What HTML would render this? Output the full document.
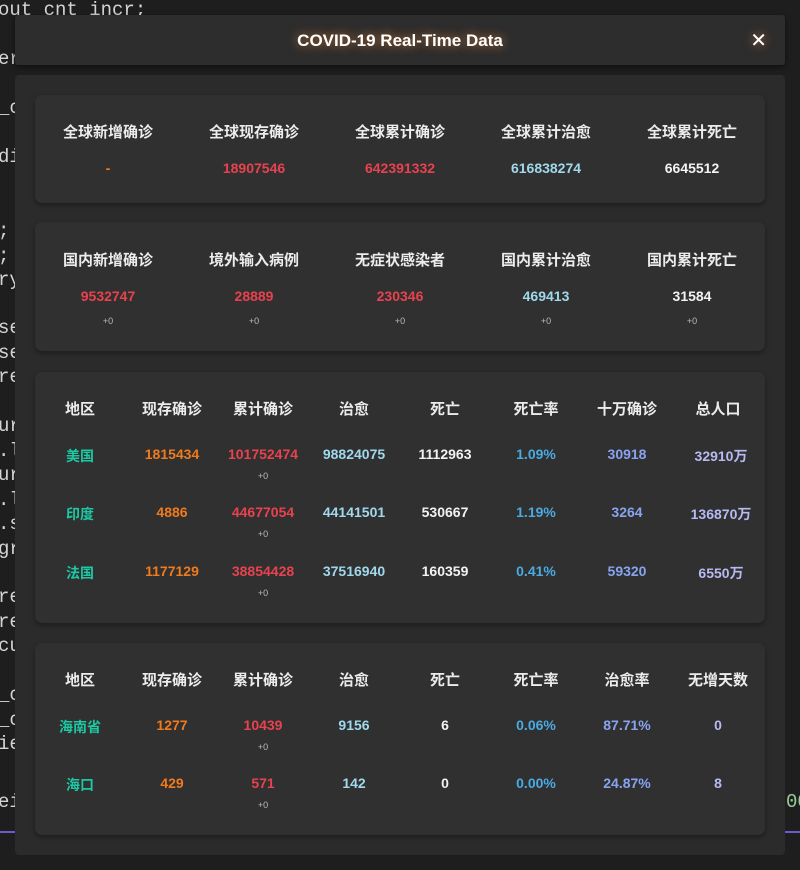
<!DOCTYPE html><html><head><meta charset="utf-8"><style>
*{margin:0;padding:0;box-sizing:border-box}
body{width:800px;height:870px;background:#1e1e1e;position:relative;overflow:hidden;font-family:"Liberation Sans","Noto Sans CJK SC",sans-serif;font-weight:bold}
.code{position:absolute;left:-2px;font-family:"Liberation Mono",monospace;font-weight:normal;font-size:19px;color:#d4d4d4;line-height:24.5px}
.hdr{position:absolute;left:15px;top:15px;width:770px;height:50px;background:#2d2d2d;border-radius:3px;color:#fff;font-size:17px;text-align:center;line-height:52px;box-shadow:0 2px 6px rgba(0,0,0,.5)}
.hdr span{text-shadow:0 0 10px rgba(240,140,60,.8)}
.x{position:absolute;right:18px;top:0;font-size:20px;font-weight:normal}
.panel{position:absolute;left:15px;top:75px;width:770px;height:780px;background:#2b2b2b;border-radius:4px}
.card{position:absolute;left:35px;width:730px;background:#303030;border-radius:7px;box-shadow:0 2px 5px rgba(0,0,0,.35)}
.t{position:absolute;text-align:center;font-size:15px;color:#ececec;transform:translateX(-50%);white-space:nowrap}
.v{font-size:14px}.s{font-size:9px;color:#bbb;font-weight:normal}
.r{color:#e8424f}.o{color:#f07a1c}.lb{color:#a0d8ec}.w{color:#f2f2f2}.g{color:#1cc9a4}.b{color:#4aaae2}.p{color:#88a4f0}.l{color:#b8baf2}
</style></head><body>
<div class="code" style="top:-2px">out_cnt_incr;</div>
<div class="code" style="top:47px">er</div>
<div class="code" style="top:96px">_c</div>
<div class="code" style="top:145px">di</div>
<div class="code" style="top:219px">;<br>;<br>ry</div>
<div class="code" style="top:316px">se<br>se<br>re</div>
<div class="code" style="top:414px">ur<br>.l<br>ur<br>.l<br>.s<br>gr</div>
<div class="code" style="top:585px">re<br>re<br>cu</div>
<div class="code" style="top:683px">_c<br>_c<br>ie</div>
<div class="code" style="top:790px">ei</div>
<div class="code" style="top:790px;left:786px;color:#9c9">00</div>
<div style="position:absolute;left:0;top:831px;width:800px;height:2px;background:#6a5acd"></div>
<div class="hdr"><span>COVID-19 Real-Time Data</span><span class="x">✕</span></div>
<div class="panel"></div>
<div class="card" style="top:95px;height:108px"></div>
<div class="card" style="top:222px;height:129px"></div>
<div class="card" style="top:372px;height:251px"></div>
<div class="card" style="top:643px;height:192px"></div>
<div id="c"></div>
<script>
var h='';function T(x,y,t,c){h+='<div class="t '+(c||'')+'" style="left:'+x+'px;top:'+(y-9)+'px">'+t+'</div>';}
var c5=[108,254,400,546,692];
['全球新增确诊','全球现存确诊','全球累计确诊','全球累计治愈','全球累计死亡'].forEach((t,i)=>T(c5[i],130,t));
[['-','o'],['18907546','r'],['642391332','r'],['616838274','lb'],['6645512','w']].forEach((a,i)=>T(c5[i],169,a[0],'v '+a[1]));
['国内新增确诊','境外输入病例','无症状感染者','国内累计治愈','国内累计死亡'].forEach((t,i)=>T(c5[i],258,t));
[['9532747','r'],['28889','r'],['230346','r'],['469413','lb'],['31584','w']].forEach((a,i)=>{T(c5[i],297,a[0],'v '+a[1]);T(c5[i],325,'+0','s')});
var c8=[80,172,263,354,445,536,627,718];
['地区','现存确诊','累计确诊','治愈','死亡','死亡率','十万确诊','总人口'].forEach((t,i)=>T(c8[i],407,t));
['地区','现存确诊','累计确诊','治愈','死亡','死亡率','治愈率','无增天数'].forEach((t,i)=>T(c8[i],678,t));
var cl=['g','o','r','lb','w','b','p','l'];
[[455,['美国','1815434','101752474','98824075','1112963','1.09%','30918','32910万']],[513,['印度','4886','44677054','44141501','530667','1.19%','3264','136870万']],[572,['法国','1177129','38854428','37516940','160359','0.41%','59320','6550万']]].forEach(r=>{r[1].forEach((t,i)=>T(c8[i]+(i==7?3:0),r[0],t,'v '+cl[i]));T(263,r[0]+25,'+0','s')});
[[726,['海南省','1277','10439','9156','6','0.06%','87.71%','0']],[784,['海口','429','571','142','0','0.00%','24.87%','8']]].forEach(r=>{r[1].forEach((t,i)=>T(c8[i],r[0],t,'v '+cl[i]));T(263,r[0]+25,'+0','s')});
document.getElementById('c').innerHTML=h;
</script>
</body></html>
